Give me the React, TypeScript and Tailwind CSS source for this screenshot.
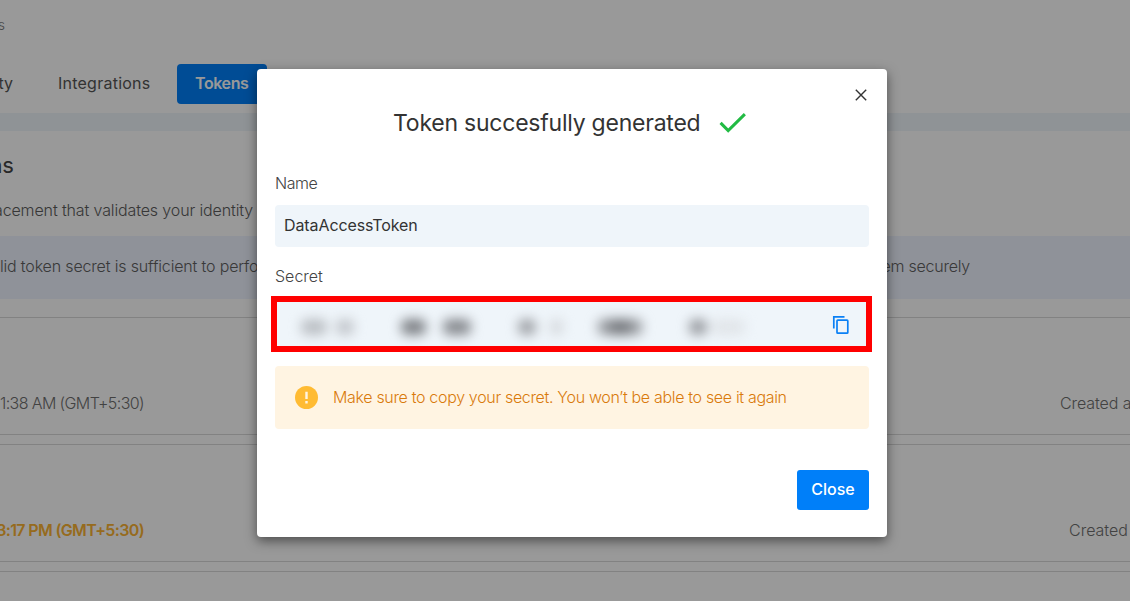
import type { ReactNode } from "react";

const smudges = [
  "ml-[24px] w-[26px] bg-[#bbbfc4]",
  "ml-[9px] w-[18px] bg-[#c3c7cc]",
  "ml-[47px] w-[25px] bg-[#7f8287]",
  "ml-[17px] w-[28px] bg-[#888b90]",
  "ml-[47px] w-[18px] bg-[#a0a3a8]",
  "ml-[14px] w-[13px] bg-[#d5d9dd]",
  "ml-[34px] w-[46px] bg-linear-to-r from-[#b0b3b8] via-[#6a6d72] to-[#b0b3b8]",
  "ml-[46px] w-[18px] bg-[#9a9da2]",
  "ml-[5px] w-[33px] bg-[#e1e5e9]",
];

/** Right-aligned text whose start may run past the left edge of the page. */
function EndText({ width, children }: { width: string; children: ReactNode }) {
  return <div className={`flex justify-end overflow-hidden whitespace-nowrap ${width}`}>{children}</div>;
}

function TokenCard({ date, created }: { date: ReactNode; created: ReactNode }) {
  return (
    <div className="mb-[9px] flex h-[118px] items-end justify-between border-y border-[#d9d9d9] pb-[19px] leading-6 text-[#6e6e6e]">
      {date}
      {created}
    </div>
  );
}

function Background() {
  return (
    <div className="h-full w-full overflow-hidden bg-white text-[16px] font-light">
      <div className="h-[64px] pt-[15px]">
        <EndText width="w-[5px]">
          <span className="text-[14px] leading-5 text-[#777]">s</span>
        </EndText>
      </div>
      <nav className="flex h-[40px] items-center font-normal text-[#555]">
        <EndText width="w-[13px]">
          <span className="pb-[2px]">ty</span>
        </EndText>
        <span className="ml-[45px] w-[119px] pb-[2px] tracking-[0.015em]">Integrations</span>
        <span className="flex h-[40px] w-[90px] items-center rounded-[4px] bg-[#007ff9] pb-[2px] pl-[18px] font-semibold tracking-[-0.025em] text-white">
          Tokens
        </span>
      </nav>
      <div className="mt-[9px] h-[18px] bg-[#eff6fb]" />
      <div className="h-[105px] pt-[18px]">
        <EndText width="w-[14px]">
          <span className="text-[22px] leading-8 font-normal text-[#444]">ns</span>
        </EndText>
        <div className="mt-[17px] leading-6 text-[#5c5c5c]">
          <EndText width="w-[253px]">
            <span className="tracking-[-0.008em]">replacement that validates your identity</span>
          </EndText>
        </div>
      </div>
      <div className="flex h-[63px] items-center bg-[#eff4ff] pb-[3px] text-[#606060]">
        <EndText width="w-[264px]">
          <span className="tracking-[-0.01em]">valid token secret is sufficient to perfor</span>
        </EndText>
        <EndText width="w-[706px]">
          <span className="tracking-[-0.015em]">them securely</span>
        </EndText>
      </div>
      <div className="pt-[18px]">
        <TokenCard
          date={
            <EndText width="w-[144px]">
              <span className="tracking-[-0.038em]">1:38 AM (GMT+5:30)</span>
            </EndText>
          }
          created={<span className="w-[70px] overflow-hidden whitespace-nowrap tracking-[-0.005em]">Created at</span>}
        />
        <TokenCard
          date={
            <EndText width="w-[144px]">
              <span className="font-semibold tracking-[-0.04em] text-[#fbb232]">3:17 PM (GMT+5:30)</span>
            </EndText>
          }
          created={<span className="w-[61px] overflow-hidden whitespace-nowrap tracking-[0em]">Created</span>}
        />
        <div className="h-[118px] border-t border-[#d9d9d9]" />
      </div>
    </div>
  );
}

function Dialog() {
  return (
    <div className="flex h-[468px] w-[630px] flex-col rounded-[4px] bg-white px-[18px] text-[16px] shadow-[0_4px_12px_rgba(0,0,0,0.5)]">
      <div className="flex h-[36px] items-end justify-end">
        <button className="mb-[4px] flex h-[12px] w-[16px] items-center justify-center" aria-label="Dismiss">
          <svg width="12" height="12" viewBox="0 0 12 12" fill="none" stroke="#333" strokeWidth="1.4">
            <path d="M0.8 0.8 11.2 11.2M11.2 0.8 0.8 11.2" />
          </svg>
        </button>
      </div>
      <div className="flex h-[36px] items-center pl-[118px]">
        <h1 className="w-[326px] text-[23px] font-[430] tracking-[-0.01em] whitespace-nowrap text-[#333]">
          Token succesfully generated
        </h1>
        <svg width="28" height="22" viewBox="0 0 28 22" fill="none" stroke="#22bb44" strokeWidth="3">
          <path d="M2.6 11.9 9.2 18.6 24.8 3.2" strokeLinecap="square" />
        </svg>
      </div>
      <div className="mt-[30px] leading-6 font-light tracking-[-0.03em] text-[#444]">Name</div>
      <div className="mt-[10px] flex h-[42px] items-center rounded-[4px] bg-[#eff5fa] pb-[2px] pl-[9px] tracking-[-0.006em] text-[#333]">
        DataAccessToken
      </div>
      <div className="mt-[17px] leading-6 font-light text-[#444]">Secret</div>
      <div className="mt-[8px] mr-[-3px] ml-[-4px] flex h-[56px] items-center border-6 border-[#ff0000] bg-[#eff5fa]">
        <div className="flex h-full flex-1 items-center blur-[6px]">
          {smudges.map((s) => (
            <span key={s} className={`mt-[5px] h-[16px] shrink-0 rounded-[6px] ${s}`} />
          ))}
        </div>
        <svg className="mt-[2px] mr-[16px]" width="18" height="20" viewBox="0 0 18 20" fill="none" stroke="#0a80f5" strokeWidth="1.7">
          <path d="M1.8 13.5V1.8H12.5" />
          <rect x="5" y="5.2" width="10.8" height="13" rx="0.8" />
        </svg>
      </div>
      <div className="mt-[14px] flex h-[63px] items-center rounded-[4px] bg-[#fff4e2] pl-[20px] font-light text-[#d97a0b]">
        <svg width="23" height="23" viewBox="0 0 23 23">
          <circle cx="11.5" cy="11.5" r="11.5" fill="#ffbb33" />
          <path d="M10.3 5.7h2.4v7.2h-2.4zM10.3 15h2.4v2.5h-2.4z" fill="#fff4e2" />
        </svg>
        <span className="ml-[15px] pb-[2px] tracking-[-0.0205em] whitespace-nowrap">
          Make sure to copy your secret. You won’t be able to see it again
        </span>
      </div>
      <div className="mt-[41px] flex justify-end">
        <button className="h-[40px] w-[72px] rounded-[3px] bg-[#007ff9] pb-[2px] font-medium text-white">Close</button>
      </div>
    </div>
  );
}

export default function App() {
  return (
    <div className="relative h-[601px] w-[1130px] overflow-hidden font-['Inter','Liberation_Sans',sans-serif]">
      <Background />
      <div className="absolute inset-0 bg-black/40 pt-[69px] pl-[257px]">
        <Dialog />
      </div>
    </div>
  );
}
